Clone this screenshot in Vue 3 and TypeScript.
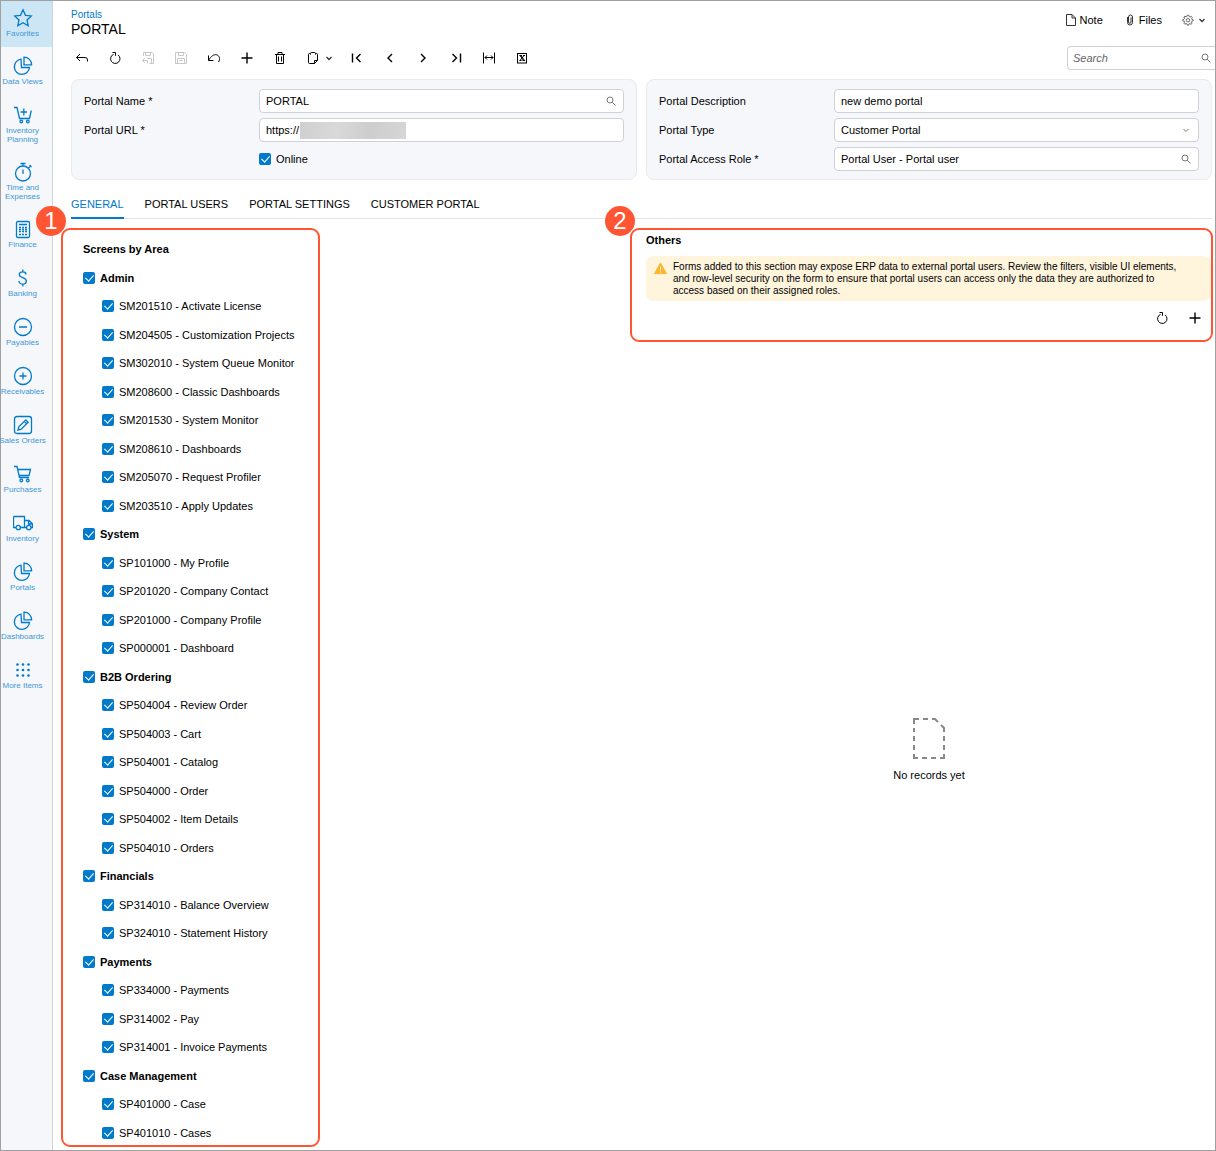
<script setup lang="ts">
import { ref } from 'vue'

interface NavItem {
  label: string
  icon: string
  tall?: boolean
  active?: boolean
}

interface Area {
  name: string
  screens: string[]
}

const pie = 'M8 3.2A7.6 7.6 0 1 0 16.5 11.5H8.500ZM11 1.2V8.8H18.6A7.5 7.5 0 0 0 11 1.2Z'
const wheels = 'M7 16.500A1.300 1.300 0 1 0 9.600 16.500A1.300 1.300 0 1 0 7 16.500M13.500 16.500A1.300 1.300 0 1 0 16.100 16.500A1.300 1.300 0 1 0 13.500 16.500'

const nav: NavItem[] = [
  { label: 'Favorites', active: true, icon: 'M10 1.8L12.5 7.3L18.3 7.9L14 11.9L15.2 17.7L10 14.8L4.8 17.7L6 11.9L1.7 7.9L7.5 7.3Z' },
  { label: 'Data Views', icon: pie },
  { label: 'Inventory Planning', tall: true, icon: 'M1 2.500H4L6.500 13.500H16.500L18.300 5.500M7.500 7H14M10.800 3.500V10.500' + wheels },
  { label: 'Time and Expenses', tall: true, icon: 'M2.5 11.5A7.5 7.5 0 1 0 17.5 11.5A7.5 7.5 0 1 0 2.5 11.5M10 4V1.5M7.5 1.5H12.5M15.5 6L17.5 4M16.5 3L18.5 5M10 7.5V12' },
  { label: 'Finance', icon: 'M5 2.5H15Q16.500 2.500 16.500 4V17Q16.500 18.500 15 18.500H5Q3.500 18.500 3.500 17V4Q3.500 2.500 5 2.500ZM6 5.500H14M6 8.500H8M9 8.500H11M12 8.500H14M6 10.500H8M9 10.500H11M12 10.500H14M6 12.500H8M9 12.500H11M12 12.500H14M6 15.500H8M9 15.500H11M12 15.500H14' },
  { label: 'Banking', icon: 'M13 6.500C13 4.500 11.500 3.800 9.800 3.800C7.800 3.800 6.300 4.800 6.300 6.500C6.300 10.500 13.300 8.800 13.300 13C13.300 15 11.800 16.200 9.800 16.200C7.500 16.200 6 15 6 13M9.800 1.500V3.800M9.800 16.200V18.500' },
  { label: 'Payables', icon: 'M1.500 10A8.500 8.500 0 1 0 18.500 10A8.500 8.500 0 1 0 1.500 10M6 10H14' },
  { label: 'Receivables', icon: 'M1.500 10A8.500 8.500 0 1 0 18.500 10A8.500 8.500 0 1 0 1.500 10M6.500 10H13.500M10 6.500V13.500' },
  { label: 'Sales Orders', icon: 'M4 1.500H16Q18.500 1.500 18.500 4V16Q18.500 18.500 16 18.500H4Q1.500 18.500 1.500 16V4Q1.500 1.500 4 1.500ZM5 15L5.800 11.800L12.800 4.800L15.200 7.200L8.200 14.200ZM11.300 6.300L13.700 8.700' },
  { label: 'Purchases', icon: 'M1 2.500H4L6.500 13.500H16M4.800 5.500H17.500L16 11.500H6.200' + wheels },
  { label: 'Inventory', icon: 'M3 14.500H0.500V4.500Q0.500 3.500 1.500 3.500H11.500V14.500H7.500M11.500 7.500H16L19.500 11V14.500H18M13.500 14.500H11.500M3 14.500A2.200 2.200 0 1 0 7.400 14.500A2.200 2.200 0 1 0 3 14.500M13.600 14.500A2.200 2.200 0 1 0 18 14.500A2.200 2.200 0 1 0 13.600 14.500M15.500 7.500V11H19.500' },
  { label: 'Portals', icon: pie },
  { label: 'Dashboards', icon: pie },
  { label: 'More Items', icon: 'dots' },
]

const dots = [4.5, 10, 15.5]

const areas: Area[] = [
  {
    name: 'Admin',
    screens: [
      'SM201510 - Activate License',
      'SM204505 - Customization Projects',
      'SM302010 - System Queue Monitor',
      'SM208600 - Classic Dashboards',
      'SM201530 - System Monitor',
      'SM208610 - Dashboards',
      'SM205070 - Request Profiler',
      'SM203510 - Apply Updates',
    ],
  },
  {
    name: 'System',
    screens: [
      'SP101000 - My Profile',
      'SP201020 - Company Contact',
      'SP201000 - Company Profile',
      'SP000001 - Dashboard',
    ],
  },
  {
    name: 'B2B Ordering',
    screens: [
      'SP504004 - Review Order',
      'SP504003 - Cart',
      'SP504001 - Catalog',
      'SP504000 - Order',
      'SP504002 - Item Details',
      'SP504010 - Orders',
    ],
  },
  { name: 'Financials', screens: ['SP314010 - Balance Overview', 'SP324010 - Statement History'] },
  { name: 'Payments', screens: ['SP334000 - Payments', 'SP314002 - Pay', 'SP314001 - Invoice Payments'] },
  { name: 'Case Management', screens: ['SP401000 - Case', 'SP401010 - Cases'] },
]

const rows = areas.flatMap((area) => [
  { text: area.name, area: true },
  ...area.screens.map((text) => ({ text, area: false })),
])

const refresh = 'M5.500 3.400A4.700 4.700 0 1 0 10 3.900M4.500 1.500H7.500V4.800'

const tools = [
  { name: 'Back', d: 'M5 3L1.500 6.500L5 10M1.500 6.500H10Q12.500 6.500 12.500 9V10.500' },
  { name: 'Refresh', d: refresh },
  { name: 'Save and close', off: true, d: 'M2.500 5V1.500H11L12.500 3V12.500H8.500M4.500 1.500V4.500H9.500V1.500M10.500 12V7.500H6M4 7L1.500 9.500L4 12M1.500 9.500H6.500V12.500' },
  { name: 'Save', off: true, d: 'M1.500 1.500H10.500L12.500 3.500V12.500H1.500ZM4.500 1.500V4.500H9.500V1.500M3.500 12.500V7.500H10.500V12.500M5.500 9.500H8.500' },
  { name: 'Undo', d: 'M1.500 4.500V9.500H6.500M1.700 9.300C4 5 7 3.200 9.500 3.800C12.500 4.500 13.500 8 11.500 11' },
  { name: 'Add', d: 'M7 1.500V12.500M1.500 7H12.500', bold: true },
  { name: 'Delete', d: 'M2 3.500H12M5 3.500V1.500H9V3.500M3.500 3.500V12.500H10.500V3.500M5.500 5.500V10.500M8.500 5.500V10.500' },
  { name: 'Clipboard', menu: true, d: 'M4.500 2.500H3.500Q2.500 2.500 2.500 3.500V11.500Q2.500 12.500 3.500 12.500H8.500L11.500 9.500V3.500Q11.500 2.500 10.500 2.500H9.500M4.500 3.500V2.500Q4.500 1.500 5.500 1.500H8.500Q9.500 1.500 9.500 2.500V3.500M8.500 12.500V9.500H11.500' },
  { name: 'First', d: 'M2.500 2.500V11.500M10.500 3L6.500 7L10.500 11', bold: true },
  { name: 'Previous', d: 'M9 3L5 7L9 11', bold: true },
  { name: 'Next', d: 'M5 3L9 7L5 11', bold: true },
  { name: 'Last', d: 'M11.500 2.500V11.500M3.500 3L7.500 7L3.500 11', bold: true },
  { name: 'Fit columns', d: 'M1.500 1.500V12.500M12.500 1.500V12.500M3 6.500H11M5 4.500L3 6.500L5 8.500M9 4.500L11 6.500L9 8.500' },
  { name: 'Export to Excel', d: 'M2 2.500H12M2.500 2V12M11.500 2V12M2 12H12M4.500 4.500H7M8 4.500H10M4.500 9.500H6.500M7.500 9.500H10M5 4.500L8.500 9.500M6 4.500L9.500 9.500M9 4.500L5 9.500' },
]

const tabs = ['GENERAL', 'PORTAL USERS', 'PORTAL SETTINGS', 'CUSTOMER PORTAL']
const activeTab = ref('GENERAL')
</script>

<template>
  <div class="page">
    <nav class="sidebar">
      <a v-for="item in nav" :key="item.label" href="#" class="nav-item" :class="{ tall: item.tall, active: item.active }">
        <svg class="nav-icon" viewBox="0 0 20 20">
          <template v-if="item.icon === 'dots'">
            <template v-for="y in dots" :key="y">
              <circle v-for="x in dots" :key="x" :cx="x" :cy="y" r="1.3" class="dot" />
            </template>
          </template>
          <path v-else :d="item.icon" />
        </svg>
        <span class="nav-label">{{ item.label }}</span>
      </a>
    </nav>

    <main class="main">
      <header class="header">
        <div class="titles">
          <a href="#" class="crumb">Portals</a>
          <h1 class="title">PORTAL</h1>
        </div>
        <div class="actions">
          <button type="button" class="action">
            <svg class="icon" viewBox="0 0 14 14"><path d="M2.500 1.500H8L11.500 5V12.500H2.500ZM8 1.500V5H11.500" /></svg>Note
          </button>
          <button type="button" class="action">
            <svg class="icon" viewBox="0 0 14 14"><path d="M4.500 4V9.500A2.500 2.500 0 0 0 9.500 9.500V4A2 2 0 0 0 5.500 4V9A1 1 0 0 0 8 9V4.500" /></svg>Files
          </button>
          <button type="button" class="action gear" aria-label="Settings">
            <svg class="cog" viewBox="0 0 14 14">
              <path d="M6 1.500H8L8.400 3L9.500 3.500L10.900 2.700L12 4L11.200 5.300L11.500 6.300L13 6.700V8L11.500 8.400L11 9.500L11.800 10.900L10.500 12L9.200 11.200L8 11.600L7.700 13H6.300L5.900 11.600L4.700 11.100L3.300 11.900L2.200 10.700L3 9.400L2.600 8.300L1 8V6.500L2.600 6L3 4.900L2.200 3.500L3.400 2.500L4.800 3.300L5.700 3Z" />
              <circle cx="7" cy="7.300" r="2" />
            </svg>
            <svg class="chevron" viewBox="0 0 8 8"><path d="M1.500 3L4 5.500L6.500 3" /></svg>
          </button>
        </div>
      </header>

      <div class="toolbar">
        <button v-for="t in tools" :key="t.name" type="button" class="tool" :class="{ off: t.off, bold: t.bold, menu: t.menu }" :aria-label="t.name">
          <svg class="icon" viewBox="0 0 14 14"><path :d="t.d" /></svg>
          <svg v-if="t.menu" class="chevron" viewBox="0 0 8 8"><path d="M1.500 3L4 5.500L6.500 3" /></svg>
        </button>
        <div class="search">
          <input type="text" placeholder="Search" aria-label="Search" />
          <svg class="lens" viewBox="0 0 12 12"><circle cx="5" cy="5" r="3" /><path d="M7.200 7.200L10.500 10.500" /></svg>
        </div>
      </div>

      <div class="columns forms">
        <section class="panel">
          <div class="field">
            <label for="name">Portal Name *</label>
            <div class="box">
              <input id="name" type="text" value="PORTAL" />
              <svg class="lens" viewBox="0 0 12 12"><circle cx="5" cy="5" r="3" /><path d="M7.200 7.200L10.500 10.500" /></svg>
            </div>
          </div>
          <div class="field">
            <label for="url">Portal URL *</label>
            <div class="box">
              <input id="url" class="url" type="text" value="https://" />
              <span class="redacted"></span>
            </div>
          </div>
          <div class="field">
            <span class="spacer"></span>
            <label class="check"><input type="checkbox" checked />Online</label>
          </div>
        </section>
        <section class="panel">
          <div class="field">
            <label for="description">Portal Description</label>
            <div class="box"><input id="description" type="text" value="new demo portal" /></div>
          </div>
          <div class="field">
            <label for="type">Portal Type</label>
            <div class="box">
              <select id="type"><option>Customer Portal</option></select>
              <svg class="chevron thin" viewBox="0 0 8 8"><path d="M1.500 3L4 5.500L6.500 3" /></svg>
            </div>
          </div>
          <div class="field">
            <label for="role">Portal Access Role *</label>
            <div class="box">
              <input id="role" type="text" value="Portal User - Portal user" />
              <svg class="lens" viewBox="0 0 12 12"><circle cx="5" cy="5" r="3" /><path d="M7.200 7.200L10.500 10.500" /></svg>
            </div>
          </div>
        </section>
      </div>

      <div class="tabs" role="tablist">
        <button v-for="t in tabs" :key="t" type="button" role="tab" class="tab" :class="{ selected: t === activeTab }" @click="activeTab = t">{{ t }}</button>
      </div>

      <div class="columns content">
        <section class="callout areas">
          <span class="badge">1</span>
          <h2>Screens by Area</h2>
          <ul>
            <li v-for="row in rows" :key="row.text" :class="{ area: row.area }">
              <label class="check"><input type="checkbox" checked />{{ row.text }}</label>
            </li>
          </ul>
        </section>

        <div class="side">
          <section class="callout others">
            <span class="badge">2</span>
            <h2>Others</h2>
            <div class="alert">
              <svg class="warning" viewBox="0 0 14 14"><path d="M7 1L13.500 12.500H0.500Z" class="tri" /><path d="M7 5V9M7 10V11.300" class="mark" /></svg>
              <p>
                Forms added to this section may expose ERP data to external portal users. Review the filters, visible UI elements,<br />
                and row-level security on the form to ensure that portal users can access only the data they are authorized to<br />
                access based on their assigned roles.
              </p>
            </div>
            <div class="grid-tools">
              <button type="button" class="tool" aria-label="Refresh"><svg class="icon" viewBox="0 0 14 14"><path :d="refresh" /></svg></button>
              <button type="button" class="tool bold" aria-label="Add row"><svg class="icon" viewBox="0 0 14 14"><path d="M7 1.500V12.500M1.500 7H12.500" /></svg></button>
            </div>
          </section>
          <div class="empty">
            <svg viewBox="0 0 32 42" class="empty-icon"><path d="M1 6V1H6M10 1H15M19 1H22L25 4M28 7L31 10V14M31 18V23M31 27V32M31 36V40H27M23 40H18M14 40H9M5 40H1V36M1 32V27M1 23V18M1 14V10" /></svg>
            <p>No records yet</p>
          </div>
        </div>
      </div>
    </main>
  </div>
</template>

<style>
body {
  margin: 0;
  background: #fff;
}
</style>

<style scoped>
* {
  box-sizing: border-box;
}
.page {
  display: flex;
  min-height: 100vh;
  border: 1px solid #a0a0a0;
  font: 11px/14px 'Liberation Sans', Arial, sans-serif;
  color: #000;
}
svg {
  fill: none;
  stroke: currentColor;
  flex: none;
  display: block;
}
button {
  border: 0;
  padding: 0;
  background: none;
  font: inherit;
  color: inherit;
}
h1,
h2,
p,
ul {
  margin: 0;
  padding: 0;
}
.sidebar {
  flex: none;
  width: 52px;
  background: #f5f7fa;
  border-right: 1px solid #d0d3d9;
}
.nav-item {
  display: flex;
  flex-direction: column;
  align-items: center;
  height: 49px;
  padding: 7px 8px 0 0;
  color: #027acc;
  text-decoration: none;
}
.nav-item.tall {
  height: 57px;
}
.nav-item.active {
  height: 46px;
  margin-bottom: 2px;
  background: #cde6f5;
}
.nav-icon {
  width: 20px;
  height: 20px;
  stroke-width: 1.3;
}
.dot {
  fill: #027acc;
  stroke: none;
}
.nav-label {
  font-size: 8px;
  line-height: 9px;
  margin-top: 1px;
  text-align: center;
  color: #3f97d6;
}
.nav-item:not(.tall) .nav-label {
  white-space: nowrap;
}
.main {
  flex: 1;
  min-width: 0;
  display: flex;
  flex-direction: column;
}
.header {
  display: flex;
  justify-content: space-between;
  padding: 6px 9px 0 18px;
  height: 45px;
}
.titles {
  padding-top: 1px;
}
.crumb {
  display: block;
  font-size: 10px;
  color: #027acc;
  text-decoration: none;
}
.title {
  font-size: 14px;
  line-height: 14px;
  font-weight: 400;
}
.actions {
  display: flex;
  gap: 20px;
  height: 26px;
}
.action {
  display: flex;
  align-items: center;
  gap: 2px;
}
.icon {
  width: 14px;
  height: 14px;
}
.action .icon {
  stroke: #333;
}
.action.gear {
  gap: 4px;
}
.cog {
  width: 12px;
  height: 12px;
  stroke: #555;
}
.chevron {
  width: 8px;
  height: 8px;
  stroke: #333;
  stroke-width: 1.3;
}
.toolbar {
  display: flex;
  align-items: center;
  height: 24px;
  padding-left: 12px;
}
.tool {
  width: 33px;
  height: 24px;
  display: flex;
  align-items: center;
  justify-content: center;
}
.toolbar .tool {
  justify-content: flex-start;
  padding-left: 10px;
}
.toolbar .tool.menu {
  width: 44px;
  gap: 5px;
}
.tool.off {
  color: #c8c8c8;
}
.tool.bold svg {
  stroke-width: 1.4;
}
.search {
  display: flex;
  align-items: center;
  width: 148px;
  height: 24px;
  margin-left: auto;
  padding: 0 3px 0 5px;
  border: 1px solid #cfd1d6;
  border-right: 0;
  border-radius: 4px 0 0 4px;
}
.search input,
.box input,
.box select {
  flex: 1;
  min-width: 0;
  border: 0;
  padding: 0;
  outline: 0;
  background: none;
  font: inherit;
  color: #000;
  appearance: none;
}
.search input::placeholder {
  font-style: italic;
  color: #666;
}
.lens {
  width: 12px;
  height: 12px;
  color: #777;
}
.columns {
  display: grid;
  grid-template-columns: minmax(0, 1fr) minmax(0, 1fr);
  gap: 9px;
  margin: 0 3px 0 18px;
}
.forms {
  margin-top: 9px;
}
.panel {
  display: flex;
  flex-direction: column;
  gap: 5px;
  padding: 9px 12px 8px;
  background: #f5f7fa;
  border: 1px solid #e9ebee;
  border-radius: 8px;
}
.field {
  display: flex;
  align-items: center;
  height: 24px;
}
.field > label:first-child,
.spacer {
  flex: none;
  width: 175px;
}
.box {
  flex: 1;
  display: flex;
  align-items: center;
  height: 24px;
  padding: 0 6px;
  background: #fff;
  border: 1px solid #cfd1d6;
  border-radius: 4px;
}
.box .url {
  flex: none;
  width: 34px;
}
.redacted {
  width: 106px;
  height: 17px;
  background: linear-gradient(100deg, #cfcfcf, #d9d9d9 35%, #cdcdcd 65%, #d6d6d6);
}
.thin {
  stroke: #777;
  stroke-width: 1;
  margin-right: 2px;
}
.check {
  display: flex;
  align-items: center;
  gap: 5px;
}
.check input {
  flex: none;
  width: 12px;
  height: 12px;
  margin: 0;
  appearance: none;
  display: flex;
  justify-content: center;
  border-radius: 2px;
  background: #027acc;
}
.check input:checked::after {
  content: '';
  width: 4px;
  height: 7px;
  margin-top: 1px;
  border: solid #fff;
  border-width: 0 1px 1px 0;
  transform: rotate(42deg);
}
.tabs {
  display: flex;
  gap: 21px;
  height: 28px;
  margin: 11px 3px 0 18px;
  border-bottom: 1px solid #e2e4e7;
}
.tab {
  height: 28px;
  border-bottom: 2px solid transparent;
}
.tab.selected {
  color: #027acc;
  border-bottom-color: #027acc;
}
.content {
  flex: 1;
  margin-top: 9px;
  margin-bottom: 3px;
}
.callout {
  position: relative;
  border: 2px solid #ff5533;
  border-radius: 9px;
}
.badge {
  position: absolute;
  top: -24px;
  left: -27px;
  width: 30px;
  height: 30px;
  border-radius: 50%;
  background: #ff5533;
  color: #fff;
  font-size: 24px;
  line-height: 30px;
  text-align: center;
}
h2 {
  font-size: 11px;
  line-height: 14px;
}
.areas {
  width: 259px;
  margin-left: -10px;
  padding: 12px 0 0 20px;
}
ul {
  list-style: none;
  margin-top: 7px;
  margin-bottom: -3px;
}
li {
  height: 28px;
  padding-left: 19px;
  display: flex;
  align-items: center;
}
li:nth-child(odd) {
  height: 29px;
}
li.area {
  padding-left: 0;
  font-weight: 700;
}
.side {
  display: flex;
  flex-direction: column;
}
.others {
  height: 114px;
  margin: 0 -1px 0 -16px;
  padding: 3px 0 0 14px;
}
.alert {
  display: flex;
  gap: 6px;
  height: 45px;
  margin-top: 9px;
  padding: 5px 0 0 8px;
  background: #fff5dd;
  border-radius: 7px;
  font-size: 10px;
  line-height: 12px;
}
.alert p {
  white-space: nowrap;
}
.warning {
  width: 13px;
  height: 13px;
  margin-top: 1px;
}
.tri {
  fill: #fbb52b;
  stroke: #fbb52b;
  stroke-linejoin: round;
}
.mark {
  stroke: #fff;
}
.grid-tools {
  display: flex;
  justify-content: flex-end;
  margin-top: 5px;
}
.empty {
  flex: 1;
  display: flex;
  flex-direction: column;
  align-items: center;
  justify-content: center;
  gap: 8px;
  padding-top: 10px;
}
.empty-icon {
  width: 32px;
  height: 42px;
  stroke: #888;
  stroke-width: 2;
}
</style>
